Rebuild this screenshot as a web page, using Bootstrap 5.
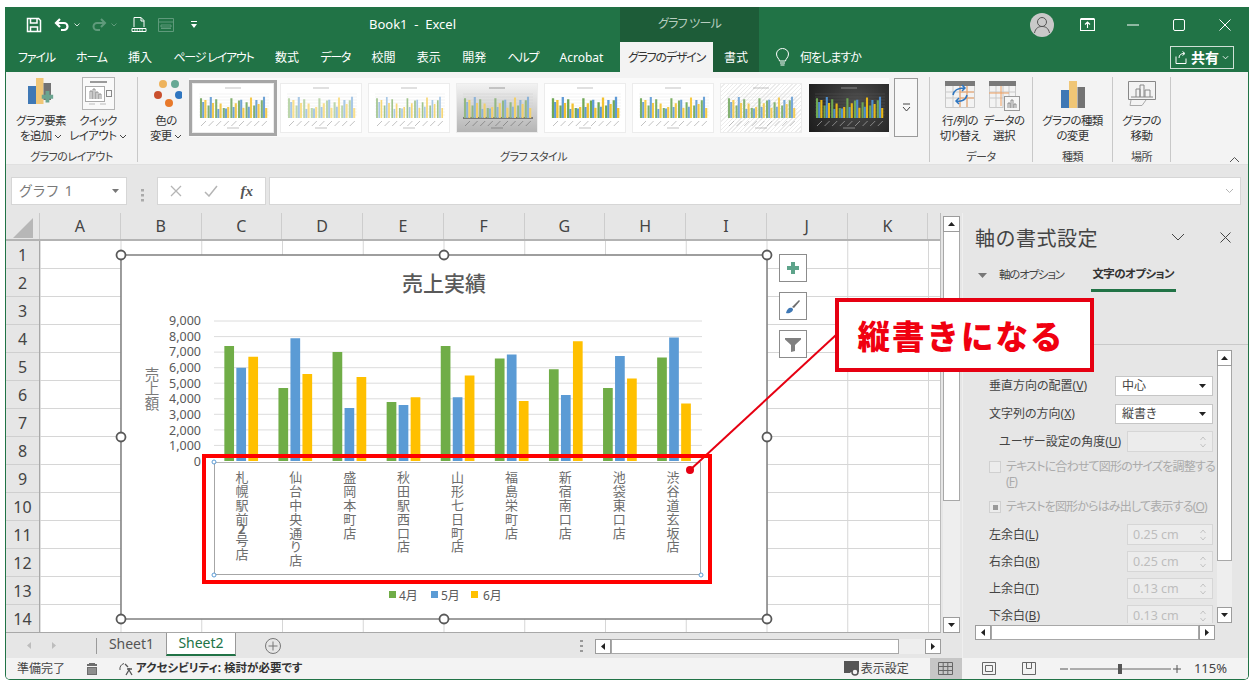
<!DOCTYPE html>
<html lang="ja">
<head>
<meta charset="utf-8">
<title>Book1 - Excel</title>
<link rel="stylesheet" href="https://cdn.jsdelivr.net/npm/bootstrap@5.3.0/dist/css/bootstrap.min.css">
<style>
html,body{margin:0;height:100%;background:#fff;overflow:hidden}
body{font-family:"Noto Sans","Noto Sans CJK JP",sans-serif;font-size:12px;color:#444;font-feature-settings:"palt";line-height:1.25}
.xl-app{position:relative;margin:7px 0 0 5px;width:1244px;height:673px;display:flex;flex-direction:column;border:1px solid #217346;border-top:0;border-radius:0 0 5px 5px;overflow:hidden}
.xl-overlay{position:absolute;left:-6px;top:-7px;width:1254px;height:687px;pointer-events:none}
.xl-head{height:65px;background:#217346;color:#fff;display:flex;flex:none}
.xl-hl{width:614px;flex:none}
.xl-hm{width:139px;flex:none;background:#1d5c38}
.xl-hr{flex:1 1 auto}
.xl-r1{height:35px;display:flex;align-items:center}
.xl-r2{height:30px;display:flex;align-items:stretch}
.xl-qat{width:363px;flex:none;display:flex;align-items:center}
.xl-qat svg{flex:none}
.xl-qat .q1{margin-left:20px}.xl-qat .q2{margin-left:12px}.xl-qat .q3{margin-left:4px}.xl-qat .q4{margin-left:11px}.xl-qat .q5{margin-left:14px}.xl-qat .q6{margin-left:17px}
.xl-doc{font-size:13px;white-space:pre}
.xl-tabs{display:flex;align-items:center;padding-left:12px;gap:21.3px;font-size:12px;white-space:nowrap}
.xl-k{letter-spacing:-1.2px}
.xl-tools{width:100%;text-align:center;color:#b7cdbf;font-size:12px;margin-bottom:2px;letter-spacing:-.8px}
.xl-tab-on{width:93px;background:#f3f3f3;color:#333;display:flex;align-items:center;justify-content:center;font-size:12px;white-space:nowrap;letter-spacing:-1.2px}
.xl-tab-fmt{flex:1;display:flex;align-items:center;justify-content:center;font-size:12px}
.xl-wbtn{width:46px;display:flex;align-items:center;justify-content:center;height:35px}
.xl-wbtn-a{width:44px}
.xl-ask{display:flex;align-items:center;padding-left:16px;gap:10px;font-size:12px;letter-spacing:-1px}
.xl-share{margin:4px 14px 3px auto;width:64px;border:1px solid #cfe0d6;display:flex;align-items:center;justify-content:center;gap:3px;font-size:14px;font-weight:700}
.xl-ribbon{height:93px;background:#f3f3f3;display:flex;padding-top:5px;flex:none;border-bottom:1px solid #e0e0e0}
.xl-grp{height:85px;border-right:1px solid #c8c8c8;display:flex;flex-direction:column;flex:none}
.xl-g1{width:132px}.xl-g2{width:792px}.xl-g3{width:103px}.xl-g4{width:80px}.xl-g5{width:58px}
.xl-gbody{height:73px;display:flex;flex:none}
.xl-g1 .xl-gbody{padding-left:9px;gap:1px}
.xl-g2 .xl-gbody{padding-left:8px}
.xl-g3 .xl-gbody{padding-left:8px}
.xl-glabel{line-height:14px;text-align:center;font-size:11px;white-space:nowrap;color:#444;letter-spacing:-.5px}
.xl-rbtn{display:flex;flex-direction:column;align-items:center;text-align:center;white-space:nowrap;line-height:15px;font-size:11.5px;color:#333;letter-spacing:-.6px}
.xl-rico{height:36px;display:flex;align-items:flex-start;justify-content:center;flex:none}
.xl-w52{width:52px}.xl-w60{width:60px}.xl-w40{width:40px}.xl-w44{width:44px}.xl-w79{width:79px}.xl-w57{width:57px}
.xl-gal{display:flex;align-items:center;gap:8px;margin:1px 0 0 3px;height:59px;background:#fafafa}
.xl-th{width:80px;height:48px;display:block;flex:none;background:#fff;--g:#8ab47a;--b:#7ba7d3;--y:#f5cf62;--l:#e4e4e4;--t:#a8a8a8;--w:2.1;box-shadow:0 0 0 1px #ececec}
.xl-sel{width:88px;height:56px;border:3px solid #a6a6a6;padding:1px;margin:0 -4px 0 0;background:#fff;box-shadow:none;display:block;flex:none}
.xl-th1{--g:#83b06f;--b:#6fa3d6;--y:#f3c94f}
.xl-th2{--g:#bcd6ac;--b:#a9c8e6;--y:#f9e08e}
.xl-th3{--g:#a0c48c;--b:#a9c8e6;--y:#f6d878;--w:1.7}
.xl-th4{background:linear-gradient(#f2f2f2,#b5b5b5);--l:#cfcfcf;--g:#93b882;--b:#8db3d8;--y:#f2d06c;--t:#777}
.xl-th5{--g:#6fa856;--b:#5f9ad6;--y:#f2c231;--w:2.3}
.xl-th6{--g:#7cb065;--b:#6da3d8;--y:#f5ca45}
.xl-th7{background:repeating-linear-gradient(135deg,#fff 0 2px,#ececec 2px 3px);--l:#ddd;--g:#84b272;--b:#79a9d9;--y:#f4cd5a}
.xl-th8{background:radial-gradient(circle at 60% 40%,#4c4c4c,#1c1c1c);--l:#555;--g:#6fa852;--b:#4f8fcf;--y:#e8b818;--t:#aaa;box-shadow:none}
.xl-mg{stroke:var(--g);stroke-width:var(--w);fill:none}
.xl-mb{stroke:var(--b);stroke-width:var(--w);fill:none}
.xl-my{stroke:var(--y);stroke-width:var(--w);fill:none}
.xl-ml{stroke:var(--l);stroke-width:.5;fill:none}
.xl-mt{stroke:var(--t);stroke-width:.7;fill:none}
.xl-more{width:24px;height:59px;border:1px solid #9a9a9a;margin:1px 0 0 5px;display:flex;align-items:center;justify-content:center;background:#f7f7f7}
.xl-coll{align-self:flex-end;margin:0 0 1px 58px}
.xl-fbar{height:48px;background:#e6e6e6;padding:12px 7px 0 5px;display:flex;align-items:flex-start;flex:none}
.xl-box{background:#fff;border:1px solid #d6d6d6;height:28px;display:flex;align-items:center}
.xl-name{width:116px;padding:0 7px;justify-content:space-between;color:#7a7a7a;font-size:14px;letter-spacing:1.4px}
.xl-dots{width:30px;display:flex;justify-content:center;align-self:center}
.xl-fx{width:109px;justify-content:space-between;padding:0 12px;color:#666}
.xl-fxi{font-family:"Liberation Serif",serif;font-style:italic;font-weight:700;font-size:15px;color:#555}
.xl-finput{flex:1;margin-left:3px;justify-content:flex-end;padding-right:6px}
.xl-main{flex:1 1 auto;display:flex;min-height:0}
.xl-book{width:956px;flex:none;display:flex;flex-direction:column;background:#e6e6e6}
.xl-top{height:420px;display:flex;flex:none}
.xl-sheet{width:935px;flex:none;position:relative;overflow:hidden;background:#fff;border-bottom:1px solid #a8a8a8;border-right:1px solid #bbb}
.xl-colh{height:28px;display:flex;background:#e6e6e6;border-bottom:2px solid #b3b3b3}
.xl-corner{width:34px;flex:none;display:flex;align-items:flex-end;justify-content:flex-end;border-right:1px solid #c9c9c9}
.xl-c{width:80.75px;flex:none;text-align:center;font-size:16px;line-height:27px;border-right:1px solid #cdcdcd;color:#444}
.xl-body{display:flex;position:relative;height:392px}
.xl-rows{width:34px;flex:none;background:#e6e6e6;border-right:1px solid #a8a8a8}
.xl-rn{height:28px;font-size:16px;line-height:28px;text-align:center;border-bottom:1px solid #cfcfcf;color:#444}
.xl-cells{flex:1;background-image:linear-gradient(to right,#d6d6d6 1px,transparent 1px),linear-gradient(to bottom,#d6d6d6 1px,transparent 1px);background-size:80.75px 28px;background-position:-.25px -1px}
.xl-chart{position:absolute;left:115px;top:14px;width:646px;height:364px;background:#fff}
.xl-chart svg{position:absolute;inset:0;overflow:visible;width:646px;height:364px}
.xl-axis{position:absolute;left:93px;top:207px;width:487px;height:113px;display:grid;grid-template-columns:repeat(9,1fr);justify-items:center;align-items:start;border:1.5px solid #a6a6a6;border-top-color:#b5b5b5;padding-top:8px}
.xl-vt{writing-mode:vertical-rl;text-orientation:upright;font-size:13px;letter-spacing:.8px;color:#6d6d6d;font-feature-settings:normal;line-height:1;font-family:"Noto Sans CJK JP",sans-serif}
.xl-nar{margin-inline:-3px;font-weight:700}
.xl-side{position:absolute;left:773px;top:13px;display:flex;flex-direction:column;gap:10px}
.xl-sbtn{width:28px;height:28px;background:#fff;border:1px solid #8c8c8c;display:flex;align-items:center;justify-content:center}
.xl-cht{font-family:"Noto Sans CJK JP",sans-serif;font-size:21px;font-weight:500;fill:#595959;text-anchor:middle}
.xl-lab{font-family:"Noto Sans",sans-serif;font-size:12.5px;fill:#595959;text-anchor:end}
.xl-lg{font-family:"Noto Sans","Noto Sans CJK JP",sans-serif;font-size:12px;fill:#595959}
.xl-yt{font-family:"Noto Sans CJK JP",sans-serif;font-size:14.5px;fill:#7a7a7a;writing-mode:vertical-rl;text-orientation:upright}
.xl-vs{width:21px;flex:none;display:flex;flex-direction:column;padding:3px 2px 0 2px}
.xl-sb{height:16px;flex:none;background:#fff;border:1px solid #9c9c9c;display:flex;align-items:center;justify-content:center}
.xl-sw{width:16px;flex:none;background:#fff;border:1px solid #9c9c9c;display:flex;align-items:center;justify-content:center}
.xl-vth{height:269px;flex:none;background:#fff;border:1px solid #a8a8a8;border-top:0}
.xl-vtr{flex:1;background:#eee}
.xl-stabs{height:25px;display:flex;align-items:stretch;flex:none;font-size:14px;position:relative}
.xl-nav{width:90px;flex:none;display:flex;align-items:center;padding-left:21px;gap:21px}
.xl-sep{width:1px;background:#9a9a9a;margin:5px 0 4px;flex:none}
.xl-stab{width:69px;display:flex;align-items:center;justify-content:center;flex:none;color:#555;padding-bottom:3px}
.xl-stab-on{width:70px;background:#fff;color:#217346;border-bottom:2px solid #217346;margin-bottom:2px;border-right:1px solid #999;border-left:1px solid #999;padding-bottom:2px}
.xl-add{margin-left:29px;display:flex;align-items:center}
.xl-gdots{margin:auto 12px auto auto;display:flex}
.xl-hs2{margin:6px 21px 4px 0;width:346px;display:flex;flex:none;height:15px}
.xl-hth{width:288px;background:#fff;border:1px solid #a8a8a8;flex:none}
.xl-htr{flex:1;background:#eee}
.xl-panel{flex:1;background:#e6e6e6;display:flex;flex-direction:column;position:relative;border-left:1px solid #efefef;min-width:0}
.xl-ptitle{height:48px;display:flex;align-items:center;padding:0 17px 0 12px;font-size:20px;color:#444;flex:none}
.xl-ptitle span{font-family:"Noto Sans CJK JP",sans-serif;font-feature-settings:normal;letter-spacing:.5px}
.xl-pclose{margin-left:35px}
.xl-ptabs{height:31px;display:flex;align-items:stretch;padding-left:15px;flex:none;font-size:11.5px}
.xl-pt{display:flex;align-items:center;gap:12px;padding-bottom:3px;white-space:nowrap;color:#444;letter-spacing:-1.2px}
.xl-pt-on{margin-left:27px;font-weight:700;border-bottom:3px solid #217346;padding:0 0 2px;color:#333;width:85px;justify-content:center;letter-spacing:-.6px}
.xl-pgap{height:53px;border-bottom:1px solid #c9c9c9;flex:none}
.xl-pscroll{height:273px;margin-top:5px;display:flex;padding-left:12px;flex:none}
.xl-pcontent{width:242px;flex:none;overflow:hidden;padding:25px 4px 0 14px;font-size:12px;color:#444}
.xl-prow{height:21px;margin-bottom:7px;display:flex;align-items:center;justify-content:space-between;white-space:nowrap}
.xl-prow2{margin-bottom:6px}
.xl-pin{padding-left:10px}
.xl-sel2{width:98px;height:20px;background:#fff;border:1px solid #c6c6c6;padding:0 6px;display:flex;align-items:center;justify-content:space-between;flex:none}
.xl-spin{width:86px;height:21px;background:#ececec;border:1px solid #d6d6d6;padding:0 5px 0 5px;display:flex;align-items:center;justify-content:space-between;flex:none;color:#bdbdbd;font-size:12.5px}
.xl-chk{display:flex;gap:5px;margin-bottom:10px;color:#ababab;line-height:15px;white-space:nowrap;letter-spacing:-.8px}
.xl-chk i{width:12px;height:12px;flex:none;background:#ececec;border:1px solid #d0d0d0;margin-top:2px;display:flex;align-items:center;justify-content:center}
.xl-chk b{width:5px;height:5px;background:#9a9a9a;display:block}
.xl-psb{width:15px;flex:none;display:flex;flex-direction:column}
.xl-pth{height:195px;flex:none;background:#fff;border:1px solid #a8a8a8;border-top:0}
.xl-ptr{flex:1;background:#eee}
.xl-phs{margin:2px 0 0 12px;width:240px;height:15px;display:flex;flex:none}
.xl-phth{flex:1;background:#fff;border:1px solid #a8a8a8}
.xl-status{height:21px;flex:none;background:#f3f3f3;display:flex;align-items:center;font-size:12px;padding:0 21px 0 11px;white-space:nowrap;color:#444}
.xl-s1{margin-left:21px}.xl-s2{margin-left:20px}.xl-s3{margin-left:2px;font-weight:700;font-size:11.5px;color:#333}
.xl-disp{margin-left:auto;display:flex;align-items:center;gap:1px}
.xl-vnorm{margin-left:21px;width:32px;height:100%;background:#c6c6c6;display:flex;align-items:center;justify-content:center}
.xl-s4{margin-left:20px}.xl-s5{margin-left:26px}.xl-s6{margin-left:24px}.xl-s7{margin-left:2px}.xl-s8{margin-left:13px;font-size:13px}
.xl-redbox{position:absolute;left:196px;top:447px;width:510px;height:130px;border:4px solid #f00}
.xl-call{position:absolute;left:829px;top:291px;width:259px;height:74px;background:#fff;border:4px solid #e60012;color:#f00010;font-family:"Noto Sans CJK JP",sans-serif;font-weight:900;font-size:32.500px;letter-spacing:2px;display:flex;align-items:center;justify-content:center;font-feature-settings:normal;padding-right:7px}
</style>
</head>
<body>
<svg width="0" height="0" class="position-absolute">
<symbol id="xl-mini" viewBox="0 0 80 48">
<path class="xl-ml" d="M6 10H76M6 13H76M6 16H76M6 19H76M6 22H76M6 25H76M6 28H76M6 31H76"/>
<path class="xl-mt" d="M32 4H48M34 44H46M8 42l5-5M15.6 42l5-5M23.2 42l5-5M30.8 42l5-5M38.4 42l5-5M46 42l5-5M53.6 42l5-5M61.2 42l5-5M68.8 42l5-5"/>
<path class="xl-mg" d="M8 34v-19.7M15.6 34v-12.5M23.2 34v-18.7M30.8 34v-10.1M38.4 34v-19.7M46 34v-17.6M53.6 34v-15.7M61.2 34v-12.5M68.8 34v-17.7"/>
<path class="xl-mb" d="M10.2 34v-16M17.8 34v-21M25.4 34v-9M33 34v-9.6M40.6 34v-11M48.2 34v-18.3M55.8 34v-11.3M63.4 34v-18M71 34v-21.2"/>
<path class="xl-my" d="M12.4 34v-17.9M20 34v-15M27.6 34v-14.4M35.2 34v-11M42.8 34v-14.7M50.4 34v-10.3M58 34v-20.5M65.6 34v-14.1M73.2 34v-9.9"/>
</symbol>
<symbol id="xl-chev" viewBox="0 0 8 5"><path d="M1 1l3 3 3-3" fill="none" stroke="#444" stroke-width="1"/></symbol>
<symbol id="xl-spin" viewBox="0 0 8 16"><path d="M1.5 6L4 3l2.500 3M1.500 10L4 13l2.500-3" fill="none" stroke="#c4c4c4" stroke-width="1"/></symbol>
</svg>

<div class="xl-app">
  <header class="xl-head">
    <div class="xl-hl">
      <div class="xl-r1">
        <div class="xl-qat">
          <svg class="q1" width="16" height="16" viewBox="0 0 16 16" fill="none" stroke="#fff" stroke-width="1.500"><path d="M1.500 1.500h11l2 2v11h-13zM4.500 2v4h6.500V2M4.500 14.500V10h7v4.500"/></svg>
          <svg class="q2" width="16" height="16" viewBox="0 0 16 16" fill="none" stroke="#fff" stroke-width="2.200"><path d="M6 2L2 6l4 4M2.500 6H10a3.500 3.500 0 0 1 0 7H7"/></svg>
          <svg class="q3" width="6" height="4" viewBox="0 0 6 4" fill="none" stroke="#cfe0d6"><path d="M.5.5L3 3 5.500.5"/></svg>
          <svg class="q4" width="16" height="16" viewBox="0 0 16 16" fill="none" stroke="#5f9a7b" stroke-width="2"><path d="M10 2l4 4-4 4M13.500 6H6a3.500 3.500 0 0 0 0 7h3"/></svg>
          <svg class="q3" width="6" height="4" viewBox="0 0 6 4" fill="none" stroke="#5f9a7b"><path d="M.5.5L3 3 5.500.5"/></svg>
          <svg class="q5" width="16" height="17" viewBox="0 0 16 17" fill="none" stroke="#fff"><path d="M3 11V1.500h7l3 3V11M10 1.500V5h3M1 12.500h14v3H1z"/><path d="M3 14h10" stroke-dasharray="1.500 1"/></svg>
          <svg class="q4" width="16" height="14" viewBox="0 0 16 14" fill="none" stroke="#5f9a7b"><path d="M.5.500h15v13H.5zM.5 4h15M3 7h10v2H3zM3 10.500h10"/></svg>
          <svg class="q6" width="6" height="7" viewBox="0 0 6 7" fill="#fff"><path d="M0 0h6v1H0zM0 3h6L3 7z"/></svg>
        </div>
        <span class="xl-doc">Book1  -  Excel</span>
      </div>
      <div class="xl-r2">
        <nav class="xl-tabs"><span class="xl-k">ファイル</span><span class="xl-k">ホーム</span><span>挿入</span><span class="xl-k">ページ レイアウト</span><span>数式</span><span class="xl-k">データ</span><span>校閲</span><span>表示</span><span>開発</span><span class="xl-k">ヘルプ</span><span>Acrobat</span></nav>
      </div>
    </div>
    <div class="xl-hm">
      <div class="xl-r1"><div class="xl-tools">グラフ ツール</div></div>
      <div class="xl-r2"><div class="xl-tab-on">グラフのデザイン</div><div class="xl-tab-fmt">書式</div></div>
    </div>
    <div class="xl-hr">
      <div class="xl-r1 justify-content-end">
        <div class="xl-wbtn xl-wbtn-a"><svg width="24" height="24" viewBox="0 0 24 24"><circle cx="12" cy="12" r="12" fill="#c9c9c9"/><circle cx="12" cy="9" r="4.500" fill="none" stroke="#555"/><path d="M4.500 20c1-5 4-6.500 7.500-6.500s6.500 1.500 7.500 6.500" fill="none" stroke="#555"/></svg></div>
        <div class="xl-wbtn"><svg width="15" height="13" viewBox="0 0 15 13" fill="none" stroke="#fff"><path d="M.5 1.500h14v11H.5zM.5 .5h14M7.500 10V4.500M5 6.500l2.500-2.500 2.500 2.500" stroke-width="1.100"/></svg></div>
        <div class="xl-wbtn"><svg width="12" height="2" viewBox="0 0 12 2"><path d="M0 1h12" stroke="#fff"/></svg></div>
        <div class="xl-wbtn"><svg width="12" height="12" viewBox="0 0 12 12"><rect x=".5" y=".5" width="11" height="11" rx="1.500" fill="none" stroke="#fff"/></svg></div>
        <div class="xl-wbtn"><svg width="12" height="12" viewBox="0 0 12 12"><path d="M.5.5l11 11M11.500.5l-11 11" stroke="#fff"/></svg></div>
      </div>
      <div class="xl-r2">
        <div class="xl-ask">
          <svg width="15" height="19" viewBox="0 0 15 19" fill="none" stroke="#fff"><path d="M4.500 13c0-2-3-3.500-3-7a6 5.500 0 0 1 12 0c0 3.500-3 5-3 7zM5 15h5M5.500 17h4"/></svg>
          <span>何をしますか</span>
        </div>
        <div class="xl-share">
          <svg width="13" height="13" viewBox="0 0 13 13" fill="none" stroke="#fff"><path d="M1 5.500v7h10v-5M4 7c0-3 2-4.500 5-4.500M7.500.5l2.500 2-2.500 2"/></svg>
          <span>共有</span>
          <svg width="7" height="5" viewBox="0 0 8 5"><path d="M1 1l3 3 3-3" fill="none" stroke="#fff"/></svg>
        </div>
      </div>
    </div>
  </header>

  <section class="xl-ribbon">
    <div class="xl-grp xl-g1">
      <div class="xl-gbody">
        <div class="xl-rbtn xl-w52">
          <div class="xl-rico"><svg width="26" height="30" viewBox="0 0 26 30"><path fill="#3f78b5" d="M0 9h8v18H0z"/><path fill="#f0c676" d="M8 1h7.500v26H8z"/><path fill="#737373" d="M15.500 6H23v17h-7.500z"/><path fill="#6aa48f" d="M19 19h4v4h4v4h-4v4h-4v-4h-4v-4h4z" transform="translate(-.5 -4) scale(.95)"/></svg></div>
          <div>グラフ要素<br>を追加 <svg width="8" height="5"><use href="#xl-chev"/></svg></div>
        </div>
        <div class="xl-rbtn xl-w60">
          <div class="xl-rico"><svg width="33" height="33" viewBox="0 0 33 33" fill="none"><rect x=".5" y=".5" width="32" height="32" fill="#f9f9f9" stroke="#b5b5b5"/><path d="M8 5h17" stroke="#7a7a7a" stroke-width="1.500"/><rect x="3.500" y="9.500" width="19" height="15" fill="#fff" stroke="#aaa"/><rect x="24.500" y="13.500" width="5" height="6" stroke="#888"/><path d="M8 22v-8h2v8M11 22v-10h2v10M14 22v-7h2v7M17 22v-5h2v5" stroke="#777" stroke-width=".8"/><path d="M7 27h6M18 27h6" stroke="#bbb"/></svg></div>
          <div>クイック<br>レイアウト <svg width="8" height="5"><use href="#xl-chev"/></svg></div>
        </div>
      </div>
      <div class="xl-glabel">グラフのレイアウト</div>
    </div>
    <div class="xl-grp xl-g2">
      <div class="xl-gbody">
        <div class="xl-rbtn xl-w40">
          <div class="xl-rico"><svg width="32" height="30" viewBox="0 0 32 30"><circle cx="13" cy="7" r="4" fill="#eeb35c"/><circle cx="25" cy="7" r="4" fill="#66a894"/><circle cx="8" cy="18" r="4" fill="#c9502d"/><circle cx="30" cy="18" r="4" fill="#2f76c0" transform="translate(-1)"/><circle cx="19" cy="26" r="4" fill="#e8792a"/></svg></div>
          <div>色の<br>変更 <svg width="8" height="5"><use href="#xl-chev"/></svg></div>
        </div>
        <div class="xl-gal">
          <div class="xl-sel"><svg class="xl-th xl-th1 d-block w-100 h-100" viewBox="0 0 80 48"><use href="#xl-mini"/></svg></div>
          <svg class="xl-th xl-th2" viewBox="0 0 80 48"><use href="#xl-mini"/></svg>
          <svg class="xl-th xl-th3" viewBox="0 0 80 48"><use href="#xl-mini"/></svg>
          <svg class="xl-th xl-th4" viewBox="0 0 80 48"><path d="M6 33h70v2H6z" fill="#777"/><use href="#xl-mini"/></svg>
          <svg class="xl-th xl-th5" viewBox="0 0 80 48"><use href="#xl-mini"/></svg>
          <svg class="xl-th xl-th6" viewBox="0 0 80 48"><use href="#xl-mini"/></svg>
          <svg class="xl-th xl-th7" viewBox="0 0 80 48"><use href="#xl-mini"/></svg>
          <svg class="xl-th xl-th8" viewBox="0 0 80 48"><use href="#xl-mini"/></svg>
        </div>
        <div class="xl-more"><svg width="9" height="10" viewBox="0 0 9 10"><path d="M1 1h7" stroke="#444"/><path d="M1 4l3.500 4L8 4" fill="none" stroke="#444"/></svg></div>
      </div>
      <div class="xl-glabel">グラフ スタイル</div>
    </div>
    <div class="xl-grp xl-g3">
      <div class="xl-gbody">
        <div class="xl-rbtn xl-w44">
          <div class="xl-rico"><svg class="mt-1" width="30" height="27" viewBox="0 0 30 27" fill="none"><rect y="0" width="30" height="5" fill="#7a7a7a"/><path d="M.5 5v21.500h29V5M8 5v21M15 5v21M22 5v21M.5 11h29M.5 17h29" stroke="#c9c9c9"/><path d="M15 11h14M15 17h14M22 5v21M15 5v21" stroke="#f0a060"/><path d="M8 14c1-5 5-7 11-7M17 4l3 3-3 3M22 14c-1 5-6 7-11 6M14 17l-3 3 3 3" stroke="#2f76c0" stroke-width="1.500"/></svg></div>
          <div>行/列の<br>切り替え</div>
        </div>
        <div class="xl-rbtn xl-w44">
          <div class="xl-rico"><svg class="mt-1" width="31" height="30" viewBox="0 0 31 30" fill="none"><rect width="27" height="5" fill="#7a7a7a"/><path d="M.5 5v21.500h14M26.500 5v10M7 5v21M14 5v21M20 5v10M.5 11h26M.5 17h14" stroke="#c9c9c9"/><path d="M0 12h20M12 5v20" stroke="#f0a060"/><rect x="15.500" y="15.500" width="15" height="14" fill="#f6f6f6" stroke="#999"/><path d="M19 27v-5h2v5M22 27v-8h2v8M25 27v-4h2v4" stroke="#777" stroke-width=".8"/></svg></div>
          <div>データの<br>選択</div>
        </div>
      </div>
      <div class="xl-glabel">データ</div>
    </div>
    <div class="xl-grp xl-g4">
      <div class="xl-gbody justify-content-center">
        <div class="xl-rbtn xl-w79">
          <div class="xl-rico"><svg class="mt-1" width="24" height="27" viewBox="0 0 24 27"><path fill="#3f78b5" d="M0 9h8v18H0z"/><path fill="#f0c676" d="M8 0h8v27H8z"/><path fill="#737373" d="M16.500 6H24v21h-7.500z"/></svg></div>
          <div>グラフの種類<br>の変更</div>
        </div>
      </div>
      <div class="xl-glabel">種類</div>
    </div>
    <div class="xl-grp xl-g5">
      <div class="xl-gbody justify-content-center">
        <div class="xl-rbtn xl-w57">
          <div class="xl-rico"><svg class="mt-1" width="28" height="26" viewBox="0 0 28 26" fill="none" stroke="#888"><path d="M.5.500h27v18H.5z"/><path d="M8 16V8h4v8M12 16V4h4v12M17 16V9h5v7M3 16h22"/><path d="M3 19l-1 5.500h12l4-5.500" stroke="#aaa"/></svg></div>
          <div>グラフの<br>移動</div>
        </div>
      </div>
      <div class="xl-glabel">場所</div>
    </div>
    <svg class="xl-coll" width="11" height="7" viewBox="0 0 11 7"><path d="M1 6l4.500-4.500L10 6" fill="none" stroke="#555"/></svg>
  </section>

  <section class="xl-fbar">
    <div class="xl-box xl-name"><span>グラフ 1</span><svg width="7" height="4" viewBox="0 0 7 4"><path d="M0 0h7L3.500 4z" fill="#777"/></svg></div>
    <div class="xl-dots"><svg class="d-block" width="3" height="13" viewBox="0 0 3 13" fill="#aaa"><path d="M0 0h3v2.500H0zM0 5h3v2.500H0zM0 10h3v2.500H0z"/></svg></div>
    <div class="xl-box xl-fx">
      <svg width="12" height="12" viewBox="0 0 12 12"><path d="M1 1l10 10M11 1L1 11" stroke="#b5b5b5" stroke-width="1.300"/></svg>
      <svg width="14" height="12" viewBox="0 0 14 12"><path d="M1 7l4 4 8-10" fill="none" stroke="#b5b5b5" stroke-width="1.500"/></svg>
      <span class="xl-fxi">fx</span>
    </div>
    <div class="xl-box xl-finput"><svg width="9" height="6" viewBox="0 0 9 6"><path d="M1 1l3.500 3.500L8 1" fill="none" stroke="#b5b5b5"/></svg></div>
  </section>

  <main class="xl-main">
    <div class="xl-book">
      <div class="xl-top">
        <div class="xl-sheet">
          <div class="xl-colh">
            <div class="xl-corner"><svg width="22" height="22" viewBox="0 0 22 22" class="me-1"><path d="M20 1v20H0z" fill="#b7b7b7"/></svg></div>
            <div class="xl-c">A</div><div class="xl-c">B</div><div class="xl-c">C</div><div class="xl-c">D</div><div class="xl-c">E</div><div class="xl-c">F</div><div class="xl-c">G</div><div class="xl-c">H</div><div class="xl-c">I</div><div class="xl-c">J</div><div class="xl-c">K</div>
          </div>
          <div class="xl-body">
            <div class="xl-rows">
              <div class="xl-rn">1</div><div class="xl-rn">2</div><div class="xl-rn">3</div><div class="xl-rn">4</div><div class="xl-rn">5</div><div class="xl-rn">6</div><div class="xl-rn">7</div><div class="xl-rn">8</div><div class="xl-rn">9</div><div class="xl-rn">10</div><div class="xl-rn">11</div><div class="xl-rn">12</div><div class="xl-rn">13</div><div class="xl-rn">14</div>
            </div>
            <div class="xl-cells"></div>
            <div class="xl-chart">
              <svg viewBox="121 255 646 364">
                <path d="M214 321H702M214 336.600H702M214 352.100H702M214 367.700H702M214 383.200H702M214 398.800H702M214 414.300H702M214 429.900H702M214 445.400H702" stroke="#dcdcdc" fill="none"/>
                <text class="xl-cht" x="444" y="291">売上実績</text>
                <g class="xl-labs">
                  <text class="xl-lab" x="201" y="325">9,000</text><text class="xl-lab" x="201" y="340.500">8,000</text><text class="xl-lab" x="201" y="356">7,000</text><text class="xl-lab" x="201" y="372">6,000</text><text class="xl-lab" x="201" y="387.500">5,000</text><text class="xl-lab" x="201" y="403">4,000</text><text class="xl-lab" x="201" y="418.500">3,000</text><text class="xl-lab" x="201" y="434.500">2,000</text><text class="xl-lab" x="201" y="450">1,000</text><text class="xl-lab" x="201" y="466">0</text>
                </g>
                <text class="xl-yt" x="152" y="367">売上額</text>
                <path d="M229.200 461V345.900M283.300 461V387.900M337.400 461V352.100M391.500 461V401.900M445.600 461V345.900M499.700 461V358.400M553.800 461V369.300M607.900 461V387.900M662 461V357.600" stroke="#70ad47" stroke-width="9.700" fill="none"/>
                <path d="M241.200 461V367.700M295.300 461V338.200M349.400 461V408.100M403.500 461V405M457.600 461V397.200M511.700 461V354.500M565.800 461V394.900M619.900 461V356M674 461V337.400" stroke="#5b9bd5" stroke-width="9.700" fill="none"/>
                <path d="M253.200 461V356.800M307.300 461V373.900M361.400 461V377M415.500 461V397.200M469.600 461V375.500M523.700 461V401.100M577.800 461V341.300M631.900 461V378.600M686 461V403.500" stroke="#ffc000" stroke-width="9.700" fill="none"/>
                <rect x="389" y="591" width="7" height="7" fill="#70ad47"/><text class="xl-lg" x="399" y="600">4月</text>
                <rect x="431" y="591" width="7" height="7" fill="#5b9bd5"/><text class="xl-lg" x="441" y="600">5月</text>
                <rect x="471" y="591" width="7" height="7" fill="#ffc000"/><text class="xl-lg" x="483" y="600">6月</text>
              </svg>
              <div class="xl-axis">
                <span class="xl-vt">札幌駅前<span class="xl-nar">2</span>号店</span><span class="xl-vt">仙台中央通り店</span><span class="xl-vt">盛岡本町店</span><span class="xl-vt">秋田駅西口店</span><span class="xl-vt">山形七日町店</span><span class="xl-vt">福島栄町店</span><span class="xl-vt">新宿南口店</span><span class="xl-vt">池袋東口店</span><span class="xl-vt">渋谷道玄坂店</span>
              </div>
              <svg viewBox="121 255 646 364">
                <rect x="121" y="255" width="646" height="364" fill="none" stroke="#7f7f7f" stroke-width="1.500"/>
                <g fill="#fff" stroke="#595959" stroke-width="1.800">
                  <circle cx="121" cy="255" r="4.500"/><circle cx="444" cy="255" r="4.500"/><circle cx="767" cy="255" r="4.500"/><circle cx="121" cy="437" r="4.500"/><circle cx="767" cy="437" r="4.500"/><circle cx="121" cy="619" r="4.500"/><circle cx="444" cy="619" r="4.500"/><circle cx="767" cy="619" r="4.500"/>
                </g>
                <g fill="#fff" stroke="#5b9bd5" stroke-width="1"><circle cx="214" cy="462" r="2"/><circle cx="214" cy="575" r="2"/><circle cx="701" cy="575" r="2"/></g>
              </svg>
            </div>
            <div class="xl-side">
              <div class="xl-sbtn"><svg width="14" height="14" viewBox="0 0 14 14"><path d="M5 1h4v4h4v4H9v4H5V9H1V5h4z" fill="#5da38a"/></svg></div>
              <div class="xl-sbtn"><svg width="16" height="16" viewBox="0 0 16 16"><path d="M1 15c1-4 3-6 6-5l1 1c0 3-4 5-7 4z" fill="#3f78b5"/><path d="M7 9L14 2l1 1-6 7z" fill="#6d6d6d"/></svg></div>
              <div class="xl-sbtn"><svg width="16" height="15" viewBox="0 0 16 15"><path d="M0 1h16v1.500L10 8v6l-4 1V8L0 2.500z" fill="#808080"/></svg></div>
            </div>
          </div>
        </div>
        <div class="xl-vs">
          <div class="xl-sb"><svg width="7" height="4" viewBox="0 0 7 4"><path d="M0 4h7L3.500 0z" fill="#222"/></svg></div>
          <div class="xl-vth"></div>
          <div class="xl-vtr"></div>
          <div class="xl-sb"><svg width="7" height="4" viewBox="0 0 7 4"><path d="M0 0h7L3.500 4z" fill="#222"/></svg></div>
        </div>
      </div>
      <div class="xl-stabs">
        <div class="xl-nav"><svg width="4" height="7" viewBox="0 0 4 7"><path d="M4 0v7L0 3.500z" fill="#bdbdbd"/></svg><svg width="4" height="7" viewBox="0 0 4 7"><path d="M0 0v7l4-3.500z" fill="#bdbdbd"/></svg></div>
        <div class="xl-sep"></div>
        <div class="xl-stab">Sheet1</div>
        <div class="xl-stab xl-stab-on">Sheet2</div>
        <div class="xl-add"><svg width="16" height="16" viewBox="0 0 16 16" fill="none" stroke="#777"><circle cx="8" cy="8" r="7.500"/><path d="M8 3.500v9M3.500 8h9"/></svg></div>
        <div class="xl-gdots"><svg width="3" height="12" viewBox="0 0 3 12" fill="#999"><path d="M0 0h3v2H0zM0 5h3v2H0zM0 10h3v2H0z"/></svg></div>
        <div class="xl-hs2">
          <div class="xl-sw"><svg width="4" height="7" viewBox="0 0 4 7"><path d="M4 0v7L0 3.500z" fill="#222"/></svg></div>
          <div class="xl-hth"></div>
          <div class="xl-htr"></div>
          <div class="xl-sw"><svg width="4" height="7" viewBox="0 0 4 7"><path d="M0 0v7l4-3.500z" fill="#222"/></svg></div>
        </div>
      </div>
    </div>

    <aside class="xl-panel">
      <div class="xl-ptitle">
        <span>軸の書式設定</span>
        <svg class="ms-auto" width="14" height="8" viewBox="0 0 14 8"><path d="M1 1l6 6 6-6" fill="none" stroke="#444"/></svg>
        <svg class="xl-pclose" width="11" height="11" viewBox="0 0 11 11"><path d="M.5.500l10 10M10.500.500l-10 10" stroke="#444"/></svg>
      </div>
      <div class="xl-ptabs">
        <div class="xl-pt"><svg width="9" height="5" viewBox="0 0 9 5"><path d="M0 0h9L4.500 5z" fill="#777"/></svg><span>軸のオプション</span></div>
        <div class="xl-pt xl-pt-on">文字のオプション</div>
      </div>
      <div class="xl-pgap"></div>
      <div class="xl-pscroll">
        <div class="xl-pcontent">
          <div class="xl-prow"><span>垂直方向の配置(<u>V</u>)</span><div class="xl-sel2"><span>中心</span><svg width="7" height="4" viewBox="0 0 7 4"><path d="M0 0h7L3.500 4z" fill="#222"/></svg></div></div>
          <div class="xl-prow"><span>文字列の方向(<u>X</u>)</span><div class="xl-sel2"><span>縦書き</span><svg width="7" height="4" viewBox="0 0 7 4"><path d="M0 0h7L3.500 4z" fill="#222"/></svg></div></div>
          <div class="xl-prow"><span class="xl-pin">ユーザー設定の角度(<u>U</u>)</span><div class="xl-spin"><span></span><svg width="8" height="16"><use href="#xl-spin"/></svg></div></div>
          <div class="xl-chk"><i></i><span>テキストに合わせて図形のサイズを調整する<br>(<u>F</u>)</span></div>
          <div class="xl-chk"><i><b></b></i><span>テキストを図形からはみ出して表示する(<u>O</u>)</span></div>
          <div class="xl-prow xl-prow2"><span>左余白(<u>L</u>)</span><div class="xl-spin"><span>0.25 cm</span><svg width="8" height="16"><use href="#xl-spin"/></svg></div></div>
          <div class="xl-prow xl-prow2"><span>右余白(<u>R</u>)</span><div class="xl-spin"><span>0.25 cm</span><svg width="8" height="16"><use href="#xl-spin"/></svg></div></div>
          <div class="xl-prow xl-prow2"><span>上余白(<u>T</u>)</span><div class="xl-spin"><span>0.13 cm</span><svg width="8" height="16"><use href="#xl-spin"/></svg></div></div>
          <div class="xl-prow xl-prow2"><span>下余白(<u>B</u>)</span><div class="xl-spin"><span>0.13 cm</span><svg width="8" height="16"><use href="#xl-spin"/></svg></div></div>
        </div>
        <div class="xl-psb">
          <div class="xl-sb"><svg width="7" height="4" viewBox="0 0 7 4"><path d="M0 4h7L3.500 0z" fill="#222"/></svg></div>
          <div class="xl-pth"></div>
          <div class="xl-ptr"></div>
          <div class="xl-sb"><svg width="7" height="4" viewBox="0 0 7 4"><path d="M0 0h7L3.500 4z" fill="#222"/></svg></div>
        </div>
      </div>
      <div class="xl-phs">
        <div class="xl-sw"><svg width="4" height="7" viewBox="0 0 4 7"><path d="M4 0v7L0 3.500z" fill="#222"/></svg></div>
        <div class="xl-phth"></div>
        <div class="xl-sw"><svg width="4" height="7" viewBox="0 0 4 7"><path d="M0 0v7l4-3.500z" fill="#222"/></svg></div>
      </div>
    </aside>
  </main>

  <footer class="xl-status">
    <span>準備完了</span>
    <svg class="xl-s1" width="12" height="12" viewBox="0 0 12 12" fill="#555"><path d="M1 1h2V0h6v1h2v2H1zM1 4h10v8H1z" opacity=".85"/><path d="M2.500 6h7M2.500 8h7M2.500 10h7" stroke="#f3f3f3" stroke-dasharray="1 1"/></svg>
    <svg class="xl-s2" width="16" height="14" viewBox="0 0 16 14" fill="none" stroke="#555"><path d="M6 1.500A5.500 5.500 0 0 0 2 8"/><path d="M7 2l3 3M9 7h5M8 13l3-5 3 5M11 8V6" stroke-width="1.300"/></svg>
    <span class="xl-s3">アクセシビリティ: 検討が必要です</span>
    <div class="xl-disp">
      <svg width="16" height="15" viewBox="0 0 16 15"><path d="M0 0h15v11H7l-1 1H0z" fill="#555"/><circle cx="11" cy="11" r="3" fill="#f3f3f3" stroke="#555" stroke-width="1.500"/></svg>
      <span>表示設定</span>
    </div>
    <div class="xl-vnorm"><svg width="15" height="13" viewBox="0 0 15 13" fill="none" stroke="#666"><path d="M.5.500h14v12H.5zM5.200.500v12M9.800.500v12M.5 4.500h14M.5 8.500h14"/></svg></div>
    <svg class="xl-s4" width="14" height="13" viewBox="0 0 14 13" fill="none" stroke="#666"><path d="M.5.500h13v12H.5zM3.500 3.500h7v6h-7z"/></svg>
    <svg class="xl-s5" width="14" height="13" viewBox="0 0 14 13" fill="none" stroke="#666"><path d="M.5.500h13v12H.5zM4.500.500v6h5v-6"/></svg>
    <svg class="xl-s6" width="8" height="2" viewBox="0 0 8 2"><path d="M0 1h8" stroke="#555"/></svg>
    <svg class="xl-s7" width="101" height="12" viewBox="0 0 101 12"><path d="M0 6h101" stroke="#666"/><rect x="48" y="1" width="4" height="10" fill="#555"/></svg>
    <svg class="xl-s7" width="8" height="8" viewBox="0 0 8 8"><path d="M0 4h8M4 0v8" stroke="#555"/></svg>
    <span class="xl-s8">115%</span>
  </footer>

  <svg class="xl-overlay" viewBox="0 0 1254 687"><path d="M836 335L690 470" stroke="#e60012" stroke-width="2"/><circle cx="690" cy="470" r="4" fill="#e60012"/></svg>
  <div class="xl-redbox"></div>
  <div class="xl-call">縦書きになる</div>
</div>
<script src="https://cdn.jsdelivr.net/npm/bootstrap@5.3.0/dist/js/bootstrap.bundle.min.js"></script>
</body>
</html>
